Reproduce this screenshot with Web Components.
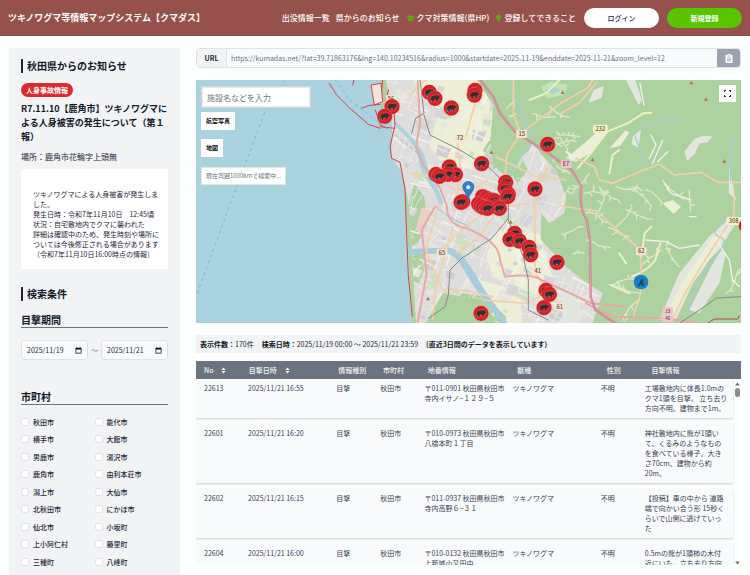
<!DOCTYPE html>
<html lang="ja">
<head>
<meta charset="utf-8">
<title>ツキノワグマ等情報マップシステム【クマダス】</title>
<style>
html,body{margin:0;height:100%}
body{font-family:"Noto Sans CJK JP","Noto Sans",sans-serif;font-size:7px;line-height:10px;color:#1f2937;background:#fdfefe;overflow:hidden}
</style>
</head>
<body>
<kuma-app></kuma-app>
<script>
const define = (name, html, setup) => customElements.define(name, class extends HTMLElement {
  constructor() {
    super();
    const t = document.createElement('template');
    t.innerHTML = '<style>*{box-sizing:border-box}button,input{font:inherit;color:inherit;margin:0}</style>' + html;
    this.attachShadow({ mode: 'open' }).append(t.content.cloneNode(true));
    if (setup) setup(this.shadowRoot, this);
  }
});

define('kuma-header', `
<style>
:host{display:flex;align-items:center;justify-content:space-between;height:36px;padding:0 8px;background:#96514d;color:#fff}
h1{margin:0;font-size:9px;line-height:14px;font-weight:700;white-space:nowrap}
nav{display:flex;align-items:center;gap:6px;font-size:8px;font-weight:500;white-space:nowrap}
a{display:flex;align-items:center;gap:2px;color:inherit;text-decoration:none}
svg{width:9px;height:8px;fill:#55b014}
svg.bulb{width:7px}
button{width:75px;height:20px;border:0;border-radius:10px;background:#fff;color:#1f2937;font-size:7px;padding:0;margin-left:2px}
button.new{background:#58c500;color:#fff;font-weight:700}
</style>
<h1>ツキノワグマ等情報マップシステム【クマダス】</h1>
<nav>
<a href="#list">出没情報一覧</a><a href="#news">県からのお知らせ</a>
<a href="#hp"><svg viewBox="0 0 18 16"><path d="M9 2 0 6l9 4 7-3v5h1V6zM4 9v4c3 2 7 2 10 0V9l-5 2z"/></svg>クマ対策情報(県HP)</a>
<a href="#about"><svg class="bulb" viewBox="0 0 14 16"><path d="M7 1a5 5 0 0 0-3 9l1 2h4l1-2a5 5 0 0 0-3-9zM5 13h4v1l-1 2H6l-1-2z"/></svg>登録してできること</a>
<button>ログイン</button><button class="new">新規登録</button>
</nav>`);

define('side-title', `
<style>:host{display:block}h2{margin:0;border-left:2px solid #1f2937;padding-left:4px;font-size:10px;line-height:14px;font-weight:700;color:#111827}</style>
<h2><slot></slot></h2>`);

define('kuma-notice', `
<style>
:host{display:block}
.tag{display:inline-block;background:#dc2a2e;color:#fff;font-weight:700;line-height:14px;border-radius:7px;padding:0 5px;margin-top:10px;vertical-align:top}
h3{margin:5px 0 0;font-size:9px;line-height:14px;font-weight:700;color:#111827}
.place{margin:7px 0 0;font-size:8px;line-height:12px}
.box{margin-top:6px;background:#fff;padding:20px 8px 10px 12px}
</style>
<side-title>秋田県からのお知らせ</side-title>
<span class="tag">人身事故情報</span>
<h3>R7.11.10【鹿角市】ツキノワグマによる人身被害の発生について（第１報）</h3>
<p class="place">場所：鹿角市花輪字上頭無</p>
<div class="box">ツキノワグマによる人身被害が発生しました。<br>発生日時：令和7年11月10日　12:45頃<br>状況：自宅敷地内でクマに襲われた<br>詳細は確認中のため、発生時刻や場所については今後修正される場合があります<br>（令和7年11月10日16:00時点の情報）</div>`);

define('date-field', `
<style>
:host{display:flex;align-items:center;flex:1;min-width:0;height:20px;border:1px solid #dfe3e8;border-radius:3px;background:#f9fafb;padding:0 5px}
input{flex:1;min-width:0;width:0;border:0;padding:0;background:none;outline:0}
button{border:0;background:none;padding:0;display:flex}
svg{width:7px;height:7px}
</style>
<input type="text" size="10"><button><svg viewBox="0 0 14 14"><path d="M3 0h2v2h4V0h2v2h2v11H1V2h2zM2.500 5v6.500h9V5z" fill="#111" fill-rule="evenodd"/></svg></button>`,
(r, el) => {
  r.querySelector('input').value = el.getAttribute('value');
  r.querySelector('input').setAttribute('aria-label', el.getAttribute('label'));
  r.querySelector('button').setAttribute('aria-label', el.getAttribute('label') + 'を選択');
});

define('kuma-search', `
<style>
:host{display:block}
h3{margin:12px 0 0;font-size:10px;line-height:14px;font-weight:700;color:#111827;border-bottom:1px solid #6b7280}
.dates{display:flex;align-items:center;gap:3px;margin:12px 0 30px;color:#6b7280}
date-field{color:#1f2937}
.cities{display:grid;grid-template-columns:1fr 1fr;grid-template-rows:repeat(5,17px 18px);margin-top:8px}
label{display:flex;align-items:center;gap:4px;font-weight:500}
input{appearance:none;width:8px;height:8px;border:1px solid #e1e4e8;border-radius:2px;background:#fff}
</style>
<side-title>検索条件</side-title>
<h3>目撃期間</h3>
<div class="dates"><date-field value="2025/11/19" label="開始日"></date-field><span>〜</span><date-field value="2025/11/21" label="終了日"></date-field></div>
<h3>市町村</h3>
<div class="cities"></div>`, r => {
  r.querySelector('.cities').innerHTML = '秋田市 能代市 横手市 大館市 男鹿市 湯沢市 鹿角市 由利本荘市 潟上市 大仙市 北秋田市 にかほ市 仙北市 小坂町 上小阿仁村 藤里町 三種町 八峰町 五城目町 八郎潟町'
    .split(' ').map(c => `<label><input type="checkbox">${c}</label>`).join('');
});

define('share-url', `
<style>
:host{display:flex;height:20px;border:1px solid #dfe3e8;border-radius:4px;overflow:hidden;background:#f9fafb}
label{width:30px;text-align:center;line-height:18px;font-weight:700;background:#f1f3f5;border-right:1px solid #dfe3e8}
input{flex:1;min-width:0;border:0;background:none;padding:0 4px;color:#6b7280;outline:0}
button{width:24px;margin:-1px;border:0;background:#9ca3af;padding:0;display:flex;align-items:center;justify-content:center}
svg{width:8px;height:9px}
</style>
<label for="u">URL</label>
<input id="u" readonly value="https://kumadas.net/?lat=39.71863176&amp;lng=140.10234516&amp;radius=1000&amp;startdate=2025-11-19&amp;enddate=2025-11-21&amp;zoom_level=12">
<button aria-label="URLをコピー"><svg viewBox="0 0 16 18"><path d="M1 2h4V0h6v2h4v16H1z" fill="#fff"/><path d="M5 4h6M4 8h8M4 11h8M4 14h8" stroke="#9ca3af" stroke-width="1.500"/></svg></button>`);

/* Map drawing uses three units per CSS pixel at the default width. */
define('kuma-map', `
<style>
:host{display:block;position:relative;aspect-ratio:545/243;overflow:hidden;background:#aad3df}
#map{display:block;width:100%;height:100%}
#map text{font-weight:500;font-size:17px;text-anchor:middle;fill:#5c4a3c}
#map text.s{font-size:13px}
.tools{position:absolute;top:6px;left:5px;display:grid;justify-items:start}
.tools input{width:110px;height:22px;border:1px solid #d2d6da;outline:1px solid #e9ebed;outline-offset:-2px;background:#fff;padding:0 5px;font-size:8px}
.tools input::placeholder{color:#757575}
.tools button{border:0;background:#fff;color:#111;font-size:6px;font-weight:700;padding:0 5px;height:18px;margin-top:4px}
.tools button+button{margin-top:9px}
.state{margin-top:10px;background:#fff;border:1px solid #e2e6e8;color:#6b7280;font-size:6px;line-height:16px;height:18px;padding:0 4px}
.full{position:absolute;top:5px;right:5px;width:17px;height:17px;background:#fff;border:0;padding:5px;display:flex}
.full svg{width:7px;height:7px}
.w,.y,.o,.t,.r,.g,.b{fill:none;stroke-linejoin:round;stroke-linecap:round}
.w{stroke:#f4f2f0;stroke-width:4}.y{stroke:#eef0c0;stroke-width:6}.o{stroke:#f3cfa8;stroke-width:5}.t{stroke:#e9a8a2;stroke-width:6}
.r{stroke:#d7424a;stroke-width:3}.g{stroke:#85888a;stroke-width:3}.b{stroke:#a5cbd9;stroke-width:4}
.m{fill:none;stroke:#cf8291;stroke-width:7}
.u{fill:#dfdddc}.f{fill:#eceed6}.gr{fill:#aed1a0}.pale{fill:#e3e5df}
.ferry{fill:none;stroke:#82a9e0;stroke-width:2.500;stroke-dasharray:10 9}
</style>
<svg id="map" viewBox="0 0 1635 729" preserveAspectRatio="xMidYMid slice" role="img" aria-label="クマ出没地図">
<defs>
<clipPath id="city"><path id="cityp" d="M570 0H842L892 75 882 185 892 255 940 300 975 235 1010 190 1050 240 1080 270 1110 350 1105 400 1060 430 1035 400 1035 480 1110 560 1160 600 1220 640 1190 729H900L870 660 740 640 690 729H660L640 380 620 280 585 230 590 100z"/></clipPath>
<clipPath id="hill"><path d="M900 0H1635V729H1260L1130 520 1060 400 1080 250 980 220z"/></clipPath>
<g id="bear"><circle r="23" fill="#dd1f26"/><circle r="20" fill="none" stroke="#c8161d" stroke-width="2"/><path d="M-14 4C-15-5-9-10-3-9 2-10 5-11 8-9l3-2 2 4 3 4-1 4-5 1-1 9H3l0-6h-6l-1 7h-6l0-7-2 6h-4z" fill="#43282a"/></g>
</defs>
<path class="gr" d="M552 0 560 60 552 85 590 95 597 135 582 200 587 235 612 247 627 330 637 510 649 729H1635V0z"/>
<use href="#cityp" class="u"/>
<g clip-path="url(#city)">
<path class="f" d="M690 0h160l40 80-10 190-130-10-50-60 30-120zM900 450l130 10 40 130-40 60-140-60-20-60zM740 0l-60 60-30-60zM850 600l120 30 10 99H880zM680 250l60 10-20 60-50-10z"/>
<path class="gr" d="M880 180l45 60-30 30-35-60zM655 310l30 40 10 80-30 60-20 10-10-120zM740 690l60-50 70 10 60 60v30H690zM640 520h60l-30 90-30-10zM975 230l20 40-30 40-20-30z"/>
<path d="M675 385l30-6-8 50-22 36-15-15z" fill="#e9cfc8"/>
<g id="grid"></g>
</g>
<g id="valleys" clip-path="url(#hill)"></g>
<!-- flat land of the eastern valleys -->
<path class="pale" d="M1465 215l30-38 25-10 30 2-15 18-26 4-12 30-24 22zM1310 170l25-22-8 55-20-10zM1290 0h28l20 60-10 15zM1178 65l15-35 30-12-6 35-30 12zM1600 260l12 60 8 40-22-20zM1390 719l60-140 90-110 70-60 10 20-50 80-60 60-70 150zM1480 690l60-120 35-60 15 10-20 90-60 90zM1092 620l40 20 30 60-10 29h-50z"/>
<path class="f" d="M1400 725l60-120 100-150 30 5-70 110-60 80-30 75zM1400 370l30-10 25 20-22 22z"/>
<path class="f" d="M1110 235l60-50 50-45 10 15-40 60-50 30zM1240 205l50-55 10 8-28 40z"/>
<!-- woods and parks between settlements -->
<path d="M1035 20l30-15 50 10-10 30-50 10z" fill="#c6e3b8"/><path d="M1045 30l30-10 20 10-25 12z" fill="#a9d4cf"/>
<!-- rivers -->
<path d="M592 130C620 165 665 195 668 240 675 285 700 310 718 340L730 375 742 370C730 325 702 290 692 250 684 200 640 165 596 120z" fill="#aad3df"/>
<path d="M632 508 700 505 760 503C800 510 830 570 860 620L935 729H915L845 635C810 590 790 525 750 520L640 524z" fill="#a5cddc"/>
<path class="b" d="M720 380q30 30 100 60M935 330q15-90 50-110t20-80M935 20q40 60 60 130M1318 170l18 50-5 40M1335 148q40-30 115-32M1604 300v-90l20-45M1475 700q20-100 75-160t20-70 30-60"/>
<!-- local roads -->
<path class="w" d="M1332 10l12 65M1365 165l15 30-20 40M1400 180l-30 70M1415 215l-30 30M1405 310l20 30 60 20M1350 480l60 5 40 20 60-10M1560 480l40 60 10 60 20 20M1110 215l20 15M1480 410l20 0M1100 260l40-30"/>
<path class="y" d="M1144 265l40-45 50-65 60-25 48-30 24-2M1240 280l10-55 20-15M1308 590q50-20 70-50l15-50M1336 530l10-70 20-20M1290 550l-20-30M1300 640l-55-25M1090 0l-40 40-50 20"/>
<path class="o" d="M640 45l50-45M645 280q80 10 120 40t110-20M810 170l30-110 10-60M785 190l10 90-20 110M952 0l0 100 22 60 120-90 80-45 20-30M972 165l-40 60-10 160M1060 255l-30 60-20 70M1092 102l60-35 50-60M1140 235l55 25 15 40 40 10 80-35 60-23 45 33 80-8 50 30h80l12-10 10 60M1092 378l110 15 60 55 70 60 5 90-5 50-20 60M740 505l60-60 90-60 110-15M730 370l-40 140 50 120 60 0 90 20M1017 360v220l70 90M1614 335v70l-90 140-60 100-40 84M860 660l130 10 80-40M770 440l-50 180-10 100M780 520l60-40 60-80M900 230l120 60 90 10"/>
<path class="t" d="M665 0l7 130-12 70 22 55 50 70 20 50q0 60 60 70 100 40 100 95l15 50q80-10 110 10l150 70 98 10M717 380l-40 70 15 130-20 110-10 50M1170 670l80 40 160 5 90 14"/>
<path class="m" d="M852 0l40 50 20 50 45 55 100 65 70 50 30 50q-10 60 15 100l10 60 2 170 14 40 60 40 80 30"/>
<path d="M852 0l40 50 20 50 45 55 100 65 70 50 30 50q-10 60 15 100l10 60 2 170 14 40 60 40 80 30" fill="none" stroke="#dc9faa" stroke-width="3"/>
<path class="g" d="M672 0l12 100-25 15-12 45M684 105l18 60 90 45 90 55 40 40 15 50 0 60-50 60-90 60-35 35-5 75-10 35-50 35M935 415l47 115 15 70 0 90 60 30M1452 729l60-40 50-35 75-4"/>
<path class="r" style="stroke:#ad5243" d="M1535 729l20-12 70 0 5-10"/>
<!-- port and coast -->
<path d="M525 15l30-5 5 55-25 10z" fill="#f0e6df" stroke="#d7424a" stroke-width="3"/>
<path class="r" d="M400 10l22 35 40 40 55 48 35 12M470 15l4-15M497 85l20-8 35-4M538 90l15 45 20 10M560 0l-3 30M572 60l20 5 5 70-15 65 5 35 25 12 15 80 5 140 5 120 12 122M578 30l-10 30M597 145l-45-5"/>
<path class="ferry" d="M267 0L207 95 147 255 107 360 0 650M417 0l45 60 90 70 60 45 60 50"/>
<g fill="#a97b4b"><path d="M1585 237l6 11h-12zM1530 52l6 11h-12zM1486 2l6 11h-12zM1190 233l6 11h-12zM1100 31l6 11h-12zM886 211l6 11h-12zM944 420l6 11h-12zM696 650l6 11h-12z"/></g>
<g id="plates"></g><g id="pins"></g>
<g transform="translate(817 358)"><path d="M0 0C-3-18-17-24-17-37a17 17 0 0 1 34 0C17-24 3-18 0 0z" fill="#2a81cb" stroke="#216ba8" stroke-width="1.500"/><circle cy="-36" r="6" fill="#fff"/></g>
<g transform="translate(1335 606)"><circle r="22" fill="#1681c9"/><path d="M-10 12L3-12l2 5 4 0-4 7 5 12H4L1 5-4 12z" fill="#23435c"/></g>
</svg>
<div class="tools"><input type="text" placeholder="施設名などを入力" aria-label="施設名"><button>航空写真</button><button>地図</button><div class="state">現在周囲1000kmで検索中...</div></div>
<button class="full" aria-label="全画面表示"><svg viewBox="0 0 14 14"><path d="M1 4V1h3M10 1h3v3M13 10v3h-3M4 13H1v-3" fill="none" stroke="#333" stroke-width="2.200"/></svg></button>`, r => {
  let seed = 7;
  const rnd = () => (seed = (seed * 16807) % 2147483647) / 2147483647;
  const $ = s => r.querySelector(s);
  // street net of the city
  let major = '', minor = '', blocks = '';
  for (let i = 0; i < 420; i++) {
    const x = 570 + rnd() * 650, y = rnd() * 729, a = (rnd() < .5 ? .45 : 2.02) + (rnd() - .5) * .5, l = 20 + rnd() * 70;
    const d = `M${x | 0} ${y | 0}l${Math.cos(a) * l | 0} ${Math.sin(a) * l | 0}`;
    if (i % 6) minor += d; else major += d;
  }
  for (let i = 0; i < 130; i++) {
    const c = ['#cfcdd0', '#cfdfc0', '#e6e4dd', '#d6d4d8', '#d6d6d0'][i % 5];
    const w = 12 + rnd() * 32;
    blocks += `<path fill="${c}" d="M${600 + rnd() * 600 | 0} ${rnd() * 729 | 0}l${w | 0} ${w / 3 | 0} -${w / 3 | 0} ${w * .7 | 0} -${w * .8 | 0} -${w / 4 | 0}z"/>`;
  }
  $('#grid').innerHTML = blocks + `<path class="w" style="stroke-width:2" d="${minor}"/><path class="w" style="stroke-width:4" d="${major}"/>`;
  // small branching valleys in the hills
  let v = '';
  const branch = (x, y, a, n) => {
    v += `M${x | 0} ${y | 0}`;
    for (let i = 0; i < n; i++) {
      a += (rnd() - .5) * .8; const l = 8 + rnd() * 9;
      x += Math.cos(a) * l; y += Math.sin(a) * l; v += `L${x | 0} ${y | 0}`;
      if (n > 2 && rnd() < .45) { branch(x, y, a + (rnd() < .5 ? 1 : -1), 1); v += `M${x | 0} ${y | 0}`; }
    }
  };
  [[1180,280,2],[1210,320,.6],[1260,320,.4],[1310,320,.7],[1350,330,.3],[1400,300,.8],[1165,400,.1],[1160,440,3.4],[1170,480,.3],[1165,520,3],[1172,600,3.2],[1165,340,.2],
   [1200,400,-.4],[1260,440,-.6],[1300,470,3.6],[1335,560,-.5],[1330,600,3.2],[1330,640,3.4],[1330,660,2.8],[1290,390,.3],[1480,330,1.5],
   [1450,560,3.6],[1590,640,-.2],[1120,320,1.8],[1120,280,-2.5],[1100,460,2.8],[1060,80,.5],[1010,100,.3],[1150,170,3],[1130,240,-2],[1070,200,-1],[960,60,2.6],[960,100,2.8]]
    .forEach(([x, y, a]) => branch(x, y, a, 6));
  $('#valleys').innerHTML = `<path class="y" style="stroke-width:4;stroke:#dfe8c8" d="${v}"/>`;
  // route numbers
  $('#plates').innerHTML = [['72',792,175,0],['15',977,162,0],['56',585,57,0],['232',1213,146,1],['E7',1110,252,2],['65',738,518,0],['41',1025,573,0],['61',1091,680,0],['62',1336,514,0],['308',1613,423,1],['13',1415,693,2,1],['46',1415,715,2,1]]
    .map(([t, x, y, k, s]) => `<rect x="${x - t.length * 6 - 4}" y="${y - 12}" width="${t.length * 12 + 8}" height="24" rx="3" fill="${['#f6e3cf','#f3f2c2','#f1c3cb'][k]}"/><text class="${s ? 's' : ''}" x="${x}" y="${y + (s ? 5 : 6)}">${t}</text>`).join('');
  $('#pins').innerHTML = [[588,80],[566,109],[700,37],[717,55],[766,84],[837,31],[835,45],[1055,193],[857,251],[760,261],[720,283],[778,284],[755,283],[730,289],[929,307],[927,325],[937,343],[1017,327],
    [800,365],[795,367],[860,350],[872,355],[885,360],[895,362],[935,350],[848,372],[855,378],[862,382],[900,380],[910,385],[874,385],[956,460],[942,478],[970,483],[999,502],[1004,524],[1083,547],[1050,631],[1060,643],[1044,683],[855,700],[1651,438]]
    .map(([x, y]) => `<use href="#bear" x="${x}" y="${y}" stroke="#f0a0a0" stroke-width="1"/>`).join('');
});

define('result-summary', `
<style>:host{display:flex;flex-wrap:wrap;gap:8px;background:#f1f3f5;padding:4px;color:#1f2937}b{color:#111827}</style>
<span><b>表示件数：</b>170件</span><span><b>検索日時：</b>2025/11/19 00:00 〜 2025/11/21 23:59</span><b>(直近3日間のデータを表示しています)</b>`);

define('sighting-table', `
<style>
:host{display:flex;flex-direction:column;position:relative;flex:1;min-height:0}
table{display:flex;flex-direction:column;flex:1;min-height:0}
thead,tbody{display:block}
tbody{flex:1;min-height:0;overflow:hidden;padding-right:8px}
tr{display:grid;grid-template-columns:1fr 2fr 1fr 1fr 2fr 2fr 1fr 2fr;padding-left:8px}
th,td{padding:0;text-align:left;min-width:0}
thead tr{background:#6b7280;color:#f3f4f6}
th{font-weight:500;line-height:18px;display:flex;align-items:center;gap:8px;white-space:nowrap}
th svg{width:5px;height:7px;fill:#fff}
tbody tr{background:#f9fafb;padding-top:4px;padding-bottom:5px;margin-bottom:6px;box-shadow:0 1px 2px #0003;color:#374151}
td{white-space:pre-line}
.bar{position:absolute;right:0;top:21px;bottom:0;width:7px;display:flex;flex-direction:column;align-items:center}
.bar svg{width:5px;height:4px;fill:#777}
.bar i{width:5px;height:9px;margin:2px 0 auto;border-radius:3px;background:#8b8b8b}
</style>
<table><thead><tr></tr></thead><tbody></tbody></table>
<div class="bar"><svg viewBox="0 0 10 8"><path d="M0 7l5-6 5 6z"/></svg><i></i><svg viewBox="0 0 10 8"><path d="M0 1l5 6 5-6z"/></svg></div>`, r => {
  const sort = '<svg viewBox="0 0 10 14"><path d="M1 6l4-5 4 5zM1 8l4 5 4-5z"/></svg>';
  r.querySelector('thead tr').innerHTML = ['No' + sort, '目撃日時' + sort, '情報種別', '市町村', '地番情報', '獣種', '性別', '目撃情報'].map(h => `<th scope="col">${h}</th>`).join('');
  r.querySelector('tbody').innerHTML = [
    ['22613', '16:55', '〒011-0901 秋田県秋田市\n寺内イサノ−１２９−５', '工場敷地内に体長1.0mの\nクマ1頭を目撃。 立ち去り\n方向不明。建物まで1m。'],
    ['22601', '16:20', '〒010-0973 秋田県秋田市\n八橋本町１丁目', '神社敷地内に熊が1頭い\nて、くるみのようなもの\nを食べている様子。大き\nさ70cm、建物から約\n20m。'],
    ['22602', '16:15', '〒011-0937 秋田県秋田市\n寺内高野６−３１', '【投稿】車の中から 道路\n端で向かい合う形 15秒く\nらいで山側に逃げていっ\nた'],
    ['22604', '16:00', '〒010-0132 秋田県秋田市\n上新城小又田中', '0.5mの熊が1頭柿の木付\n近にいた。立ち去り方向']
  ].map(([n, t, a, d]) => '<tr>' + [n, '2025/11/21 ' + t, '目撃', '秋田市', a, 'ツキノワグマ', '不明', d].map(c => `<td>${c}</td>`).join('') + '</tr>').join('');
});

define('kuma-app', `
<style>
:host{display:flex;flex-direction:column;height:100vh}
.page{flex:1;min-height:0;display:grid;grid-template-columns:minmax(0,171fr) minmax(0,545fr);grid-template-rows:minmax(0,1fr);gap:16px;padding:12px 9px 0}
aside{background:#f1f3f5;padding:11px 12px 0;overflow:hidden}
kuma-search{margin-top:18px}
main{display:flex;flex-direction:column;min-height:0;padding-bottom:10px}
kuma-map{margin:12px 0;flex:none}
sighting-table{margin-top:8px}
</style>
<kuma-header></kuma-header>
<div class="page">
<aside><kuma-notice></kuma-notice><kuma-search></kuma-search></aside>
<main><share-url></share-url><kuma-map></kuma-map><result-summary></result-summary><sighting-table></sighting-table></main>
</div>`);
</script>
</body>
</html>
